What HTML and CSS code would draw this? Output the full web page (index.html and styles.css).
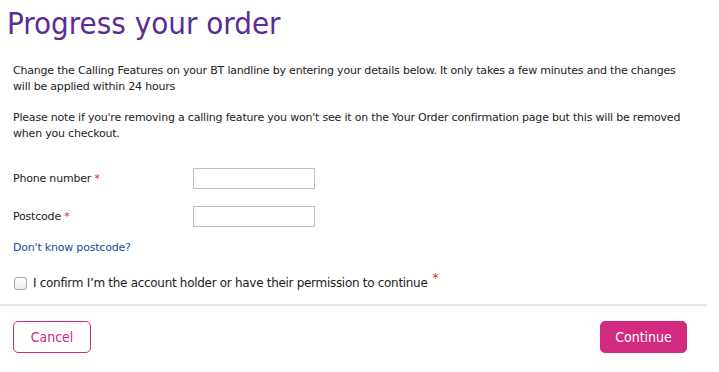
FILE: index.html
```html
<!DOCTYPE html>
<html>
<head>
<meta charset="utf-8">
<link rel="stylesheet" href="styles.css">
</head>
<body>
<div class="page">
  <h1 class="title">Progress your order</h1>
  <div class="content">
    <p class="intro">Change the Calling Features on your BT landline by entering your details below. It only takes a few minutes and the changes will be applied within 24 hours</p>
    <p class="intro">Please note if you're removing a calling feature you won't see it on the Your Order confirmation page but this will be removed when you checkout.</p>
    <div class="field">
      <label class="label">Phone number <span class="req">*</span></label>
      <input class="input" type="text">
    </div>
    <div class="field">
      <label class="label">Postcode <span class="req">*</span></label>
      <input class="input" type="text">
    </div>
    <a class="link" href="#">Don't know postcode?</a>
    <label class="confirm">
      <span class="box"></span>
      <span class="confirm-text">I confirm I’m the account holder or have their permission to continue</span>
      <sup class="req sup">*</sup>
    </label>
  </div>
  <div class="actions">
    <button class="btn btn-cancel">Cancel</button>
    <button class="btn btn-continue">Continue</button>
  </div>
</div>
</body>
</html>
```

FILE: styles.css
```css
html, body { margin: 0; padding: 0; background: #fff; }
body { font-family: "DejaVu Sans", Verdana, sans-serif; color: #222; }
.page { width: 707px; }
.title {
  margin: 0;
  padding: 5px 0 0 7px;
  font-family: "DejaVu Sans Condensed", "DejaVu Sans", sans-serif;
  font-weight: normal;
  font-size: 31px;
  line-height: 36px;
  color: #5a2d97;
}
.content { padding: 22px 22px 0 13px; }
.intro {
  margin: 0 0 15px 0;
  font-size: 11px;
  line-height: 16px;
  letter-spacing: -0.2px;
  color: #222;
}
.field { display: flex; align-items: center; height: 22px; margin-bottom: 16px; }
.intro + .field { margin-top: 25px; }
.label { width: 180px; font-size: 11px; letter-spacing: -0.2px; color: #222; }
.req { color: #e0242c; }
.input {
  width: 120px; height: 19px; margin: 0; padding: 0;
  border: 1px solid #bfbfbf; box-sizing: content-box;
}
.link {
  display: block; margin-top: -2px;
  font-size: 11px; letter-spacing: -0.2px; color: #1a4b9b; text-decoration: none;
}
.confirm { display: flex; align-items: center; margin-top: 22px; }
.box {
  width: 11px; height: 11px; border: 1px solid #a8a8a8; border-radius: 3px;
  background: linear-gradient(#fff, #ececec); margin: 0 6px 0 1px;
}
.confirm-text { font-size: 12px; letter-spacing: -0.3px; color: #222; }
.sup { font-size: 12px; align-self: flex-start; margin-left: 5px; margin-top: -5px; }
.actions {
  margin-top: 14px; border-top: 2px solid #e8e8e8;
  display: flex; justify-content: space-between;
  padding: 15px 20px 0 13px;
}
.btn {
  height: 32px; border-radius: 5px; font-family: "DejaVu Sans Condensed", "DejaVu Sans", sans-serif;
  font-size: 14px; cursor: pointer; box-sizing: border-box;
}
.btn-cancel { width: 78px; background: #fff; border: 1px solid #d6287f; color: #d6287f; }
.btn-continue { width: 87px; background: #d12a7f; border: 1px solid #d12a7f; color: #fff; font-weight: 500; }
```
